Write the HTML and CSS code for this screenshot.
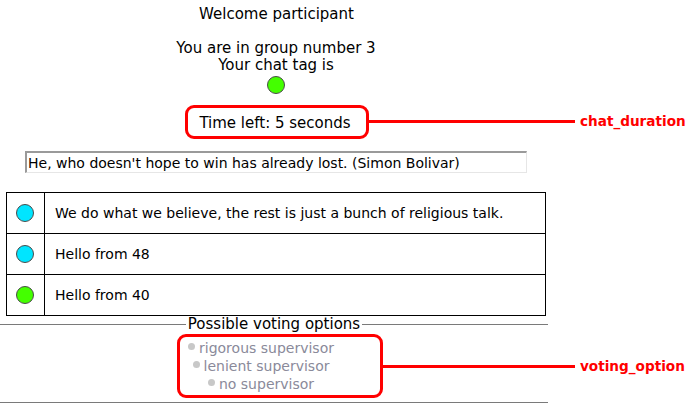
FILE: index.html
```html
<!DOCTYPE html>
<html>
<head>
<meta charset="utf-8">
<link rel="stylesheet" href="styles.css">
</head>
<body>
<div class="page">
  <div class="welcome">Welcome participant</div>
  <div class="group">You are in group number 3<br>Your chat tag is</div>
  <span class="tag green"></span>
  <div class="timer">Time left: 5 seconds</div>
  <input class="quote" type="text" value="He, who doesn't hope to win has already lost. (Simon Bolivar)">
  <table class="chat">
    <tr><td class="who"><span class="tag cyan"></span></td><td class="msg">We do what we believe, the rest is just a bunch of religious talk.</td></tr>
    <tr><td class="who"><span class="tag cyan"></span></td><td class="msg">Hello from 48</td></tr>
    <tr><td class="who"><span class="tag green"></span></td><td class="msg">Hello from 40</td></tr>
  </table>
  <fieldset class="voting">
    <legend>Possible voting options</legend>
    <label class="opt"><span class="radio"></span>rigorous supervisor</label>
    <label class="opt"><span class="radio"></span>lenient supervisor</label>
    <label class="opt"><span class="radio"></span>no supervisor</label>
  </fieldset>
</div>

<div class="note note-timer"></div>
<div class="lead lead-timer"></div>
<div class="label label-timer">chat_duration</div>

<div class="note note-vote"></div>
<div class="lead lead-vote"></div>
<div class="label label-vote">voting_option</div>
</body>
</html>
```

FILE: styles.css
```css
html, body {
  margin: 0;
  padding: 0;
  background: #fff;
}
body {
  font-family: "DejaVu Sans", Verdana, sans-serif;
  font-size: 15px;
  color: #000;
  width: 691px;
  height: 407px;
  position: relative;
  overflow: hidden;
}
.page {
  width: 548px;
  display: flex;
  flex-direction: column;
  align-items: center;
  line-height: 17px;
}
.welcome {
  margin-top: 6px;
  margin-left: 5px;
  text-align: center;
}
.group {
  margin-top: 17px;
  margin-left: 4px;
  text-align: center;
}
.tag {
  display: inline-block;
  width: 16px;
  height: 16px;
  border-radius: 50%;
  border: 1px solid #4a4a4a;
  box-sizing: content-box;
}
.page > .tag {
  margin-top: 2px;
  margin-left: 3px;
}
.green { background: #44ff00; }
.cyan { background: #00e5ff; }
.timer {
  margin-top: 21px;
  margin-left: 2px;
  text-align: center;
}
.quote {
  align-self: flex-start;
  margin: 19px 0 0 25px;
  width: 502px;
  height: 22px;
  box-sizing: border-box;
  padding: 0 1px;
  font-family: "DejaVu Sans", Verdana, sans-serif;
  font-size: 14px;
  color: #000;
  border-style: solid;
  border-width: 2px 1px 1px 2px;
  border-color: #9a9a9a #e6e6e6 #e6e6e6 #9a9a9a;
  background: #fff;
  outline: none;
}
.chat {
  align-self: flex-start;
  margin: 19px 0 0 6px;
  width: 540px;
  border-collapse: collapse;
  border: 1px solid #000;
  font-size: 14px;
}
.chat td {
  border: 1px solid #000;
  height: 40px;
  padding: 0;
  vertical-align: middle;
}
.chat .who {
  width: 37px;
  text-align: center;
}
.chat .who .tag {
  display: block;
  margin: 0 auto 0 9px;
}
.chat .msg {
  padding-left: 10px;
}
.voting {
  align-self: stretch;
  margin: 0;
  padding: 6px 0 9px 0;
  border: none;
  border-top: 1px solid #7a7a7a;
  border-bottom: 1px solid #7a7a7a;
  display: flex;
  flex-direction: column;
  align-items: center;
  min-width: 0;
}
.voting legend {
  margin: 0 auto;
  padding: 0 2px;
  line-height: 17px;
}
.opt {
  display: block;
  text-align: center;
  line-height: 18px;
  font-size: 14px;
  color: #8a8a9a;
  margin-right: 26px;
}
.radio {
  display: inline-block;
  width: 7px;
  height: 7px;
  border-radius: 50%;
  background: #c8c8c8;
  margin-right: 4px;
  vertical-align: 3px;
}

/* annotation overlays */
.note {
  position: absolute;
  border: 3px solid #ff0000;
  border-radius: 9px;
  box-sizing: border-box;
}
.note-timer { left: 185px; top: 105px; width: 184px; height: 34px; }
.note-vote { left: 177px; top: 334px; width: 206px; height: 64px; }
.lead {
  position: absolute;
  height: 3px;
  background: #ff0000;
}
.lead-timer { left: 368px; top: 120px; width: 207px; }
.lead-vote { left: 382px; top: 365px; width: 193px; }
.label {
  position: absolute;
  font-family: "DejaVu Sans", Verdana, sans-serif;
  font-weight: bold;
  font-size: 13.6px;
  line-height: 16px;
  color: #ff0000;
}
.label-timer { left: 580px; top: 113px; }
.label-vote { left: 580px; top: 358px; }
```
